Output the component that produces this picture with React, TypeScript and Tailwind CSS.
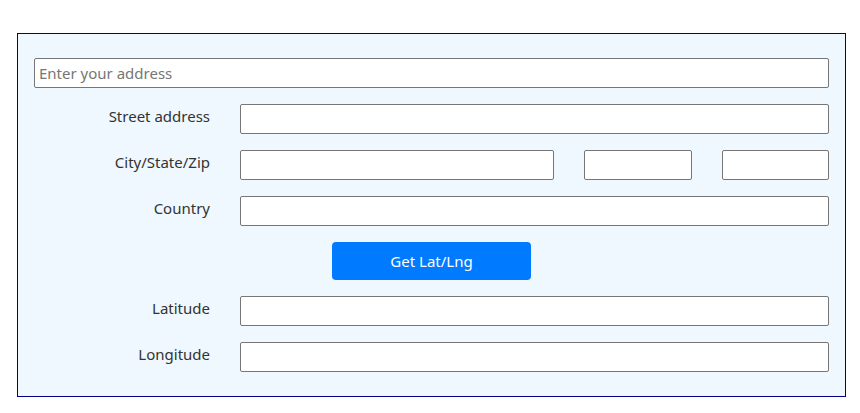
const inputCls =
  "h-[30px] min-w-0 rounded-[2px] border border-[#767676] bg-white px-1 text-[15px] text-[#222] outline-none";

function Row({ label, children }: { label: string; children: React.ReactNode }) {
  return (
    <div className="flex items-center">
      <label className="w-[176px] shrink-0 pb-[6px] text-right text-[15px] text-[#333]">{label}</label>
      <div className="ml-[30px] flex min-w-0 flex-1 gap-[30px]">{children}</div>
    </div>
  );
}

export default function App() {
  return (
    <div
      className="min-h-[413px] bg-white pt-[33px] pl-[17px]"
      style={{ fontFamily: '"Noto Sans", "Open Sans", sans-serif' }}
    >
      <div className="flex w-[829px] flex-col gap-4 border border-[#00008b] bg-[#f0f8ff] px-4 py-6">
        <input className={`${inputCls} w-full placeholder:text-[#767676]`} placeholder="Enter your address" />
        <Row label="Street address">
          <input className={`${inputCls} flex-1`} />
        </Row>
        <Row label="City/State/Zip">
          <input className={`${inputCls} w-[314px] shrink-0`} />
          <input className={`${inputCls} w-[108px] shrink-0`} />
          <input className={`${inputCls} flex-1`} />
        </Row>
        <Row label="Country">
          <input className={`${inputCls} flex-1`} />
        </Row>
        <div className="flex justify-center">
          <button className="h-[38px] w-[199px] rounded-[4px] bg-[#007bff] text-[15px] text-white">
            Get Lat/Lng
          </button>
        </div>
        <Row label="Latitude">
          <input className={`${inputCls} flex-1`} />
        </Row>
        <Row label="Longitude">
          <input className={`${inputCls} flex-1`} />
        </Row>
      </div>
    </div>
  );
}
